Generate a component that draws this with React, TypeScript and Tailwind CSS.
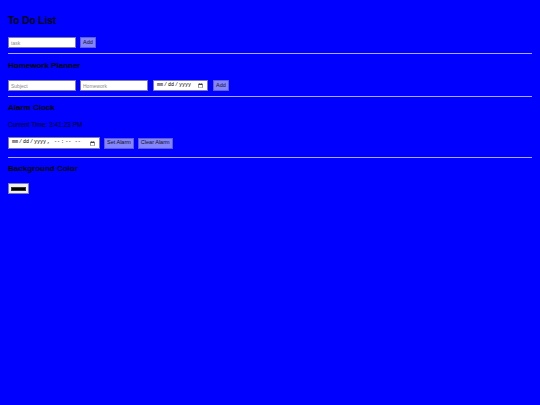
import React, { useState } from 'react';

const inputCls =
  'h-[11px] w-[68px] border border-[#7a7ab8] bg-white px-[2px] text-[5px] text-black placeholder:text-[#8a8a8a] outline-none';
const btnCls =
  'h-[11px] border border-[#5c5cd6] bg-[#8585ff] px-[2px] text-[5.5px] leading-none text-[#111]';

const Divider: React.FC<{ className?: string }> = ({ className = '' }) => (
  <div className={`h-px w-full bg-[#a9a9ff] ${className}`} />
);

const App: React.FC = () => {
  const [tasks, setTasks] = useState<string[]>([]);
  const [task, setTask] = useState('');
  const [time] = useState('3:41:23 PM');

  return (
    <div className="min-h-screen bg-[#0000ff] px-2 font-['Liberation_Sans',Arial,sans-serif] text-black">
      {/* To Do List */}
      <h1 className="pt-[15px] text-[10px] font-bold leading-[12px]">To Do List</h1>
      <div className="mt-[10px] flex items-center gap-[4px]">
        <input
          className={inputCls}
          placeholder="task"
          value={task}
          onChange={(e) => setTask(e.target.value)}
        />
        <button
          className={btnCls}
          onClick={() => {
            if (task.trim()) setTasks([...tasks, task.trim()]);
            setTask('');
          }}
        >
          Add
        </button>
      </div>
      {tasks.length > 0 && (
        <ul className="text-[6px]">
          {tasks.map((t, i) => (
            <li key={i}>{t}</li>
          ))}
        </ul>
      )}
      <Divider className="mt-[5px]" />

      {/* Homework Planner */}
      <h2 className="mt-[7px] text-[8px] font-bold leading-[10px]">Homework Planner</h2>
      <div className="mt-[9px] flex items-center gap-[4px]">
        <input className={inputCls} placeholder="Subject" />
        <input className={inputCls} placeholder="Homework" />
        <input
          type="date"
          className="ml-[1px] h-[11px] w-[55px] border border-[#7a7ab8] bg-white px-[2px] font-['Liberation_Mono',monospace] text-[5px] text-black"
        />
        <button className={`${btnCls} ml-[1px]`}>Add</button>
      </div>
      <Divider className="mt-[5px]" />

      {/* Alarm Clock */}
      <h2 className="mt-[6px] text-[8px] font-bold leading-[10px]">Alarm Clock</h2>
      <p className="mt-[8px] text-[6.5px] leading-[8px]">Current Time: {time}</p>
      <div className="mt-[8px] flex items-center gap-[4px]">
        <input
          type="datetime-local"
          className="h-[12px] w-[92px] border border-[#7a7ab8] bg-white px-[2px] font-['Liberation_Mono',monospace] text-[5px] text-black"
        />
        <button className={`${btnCls} h-[10px]`}>Set Alarm</button>
        <button className={`${btnCls} h-[10px]`}>Clear Alarm</button>
      </div>
      <Divider className="mt-[8px]" />

      {/* Background Color */}
      <h2 className="mt-[6px] text-[8px] font-bold leading-[10px]">Background Color</h2>
      <div className="mt-[9px] flex h-[11px] w-[21px] items-center justify-center border border-[#7a7ab8] bg-[#efefef]">
        <span className="block h-[4px] w-[15px] border border-[#333] bg-black" />
      </div>
    </div>
  );
};

export default App;
